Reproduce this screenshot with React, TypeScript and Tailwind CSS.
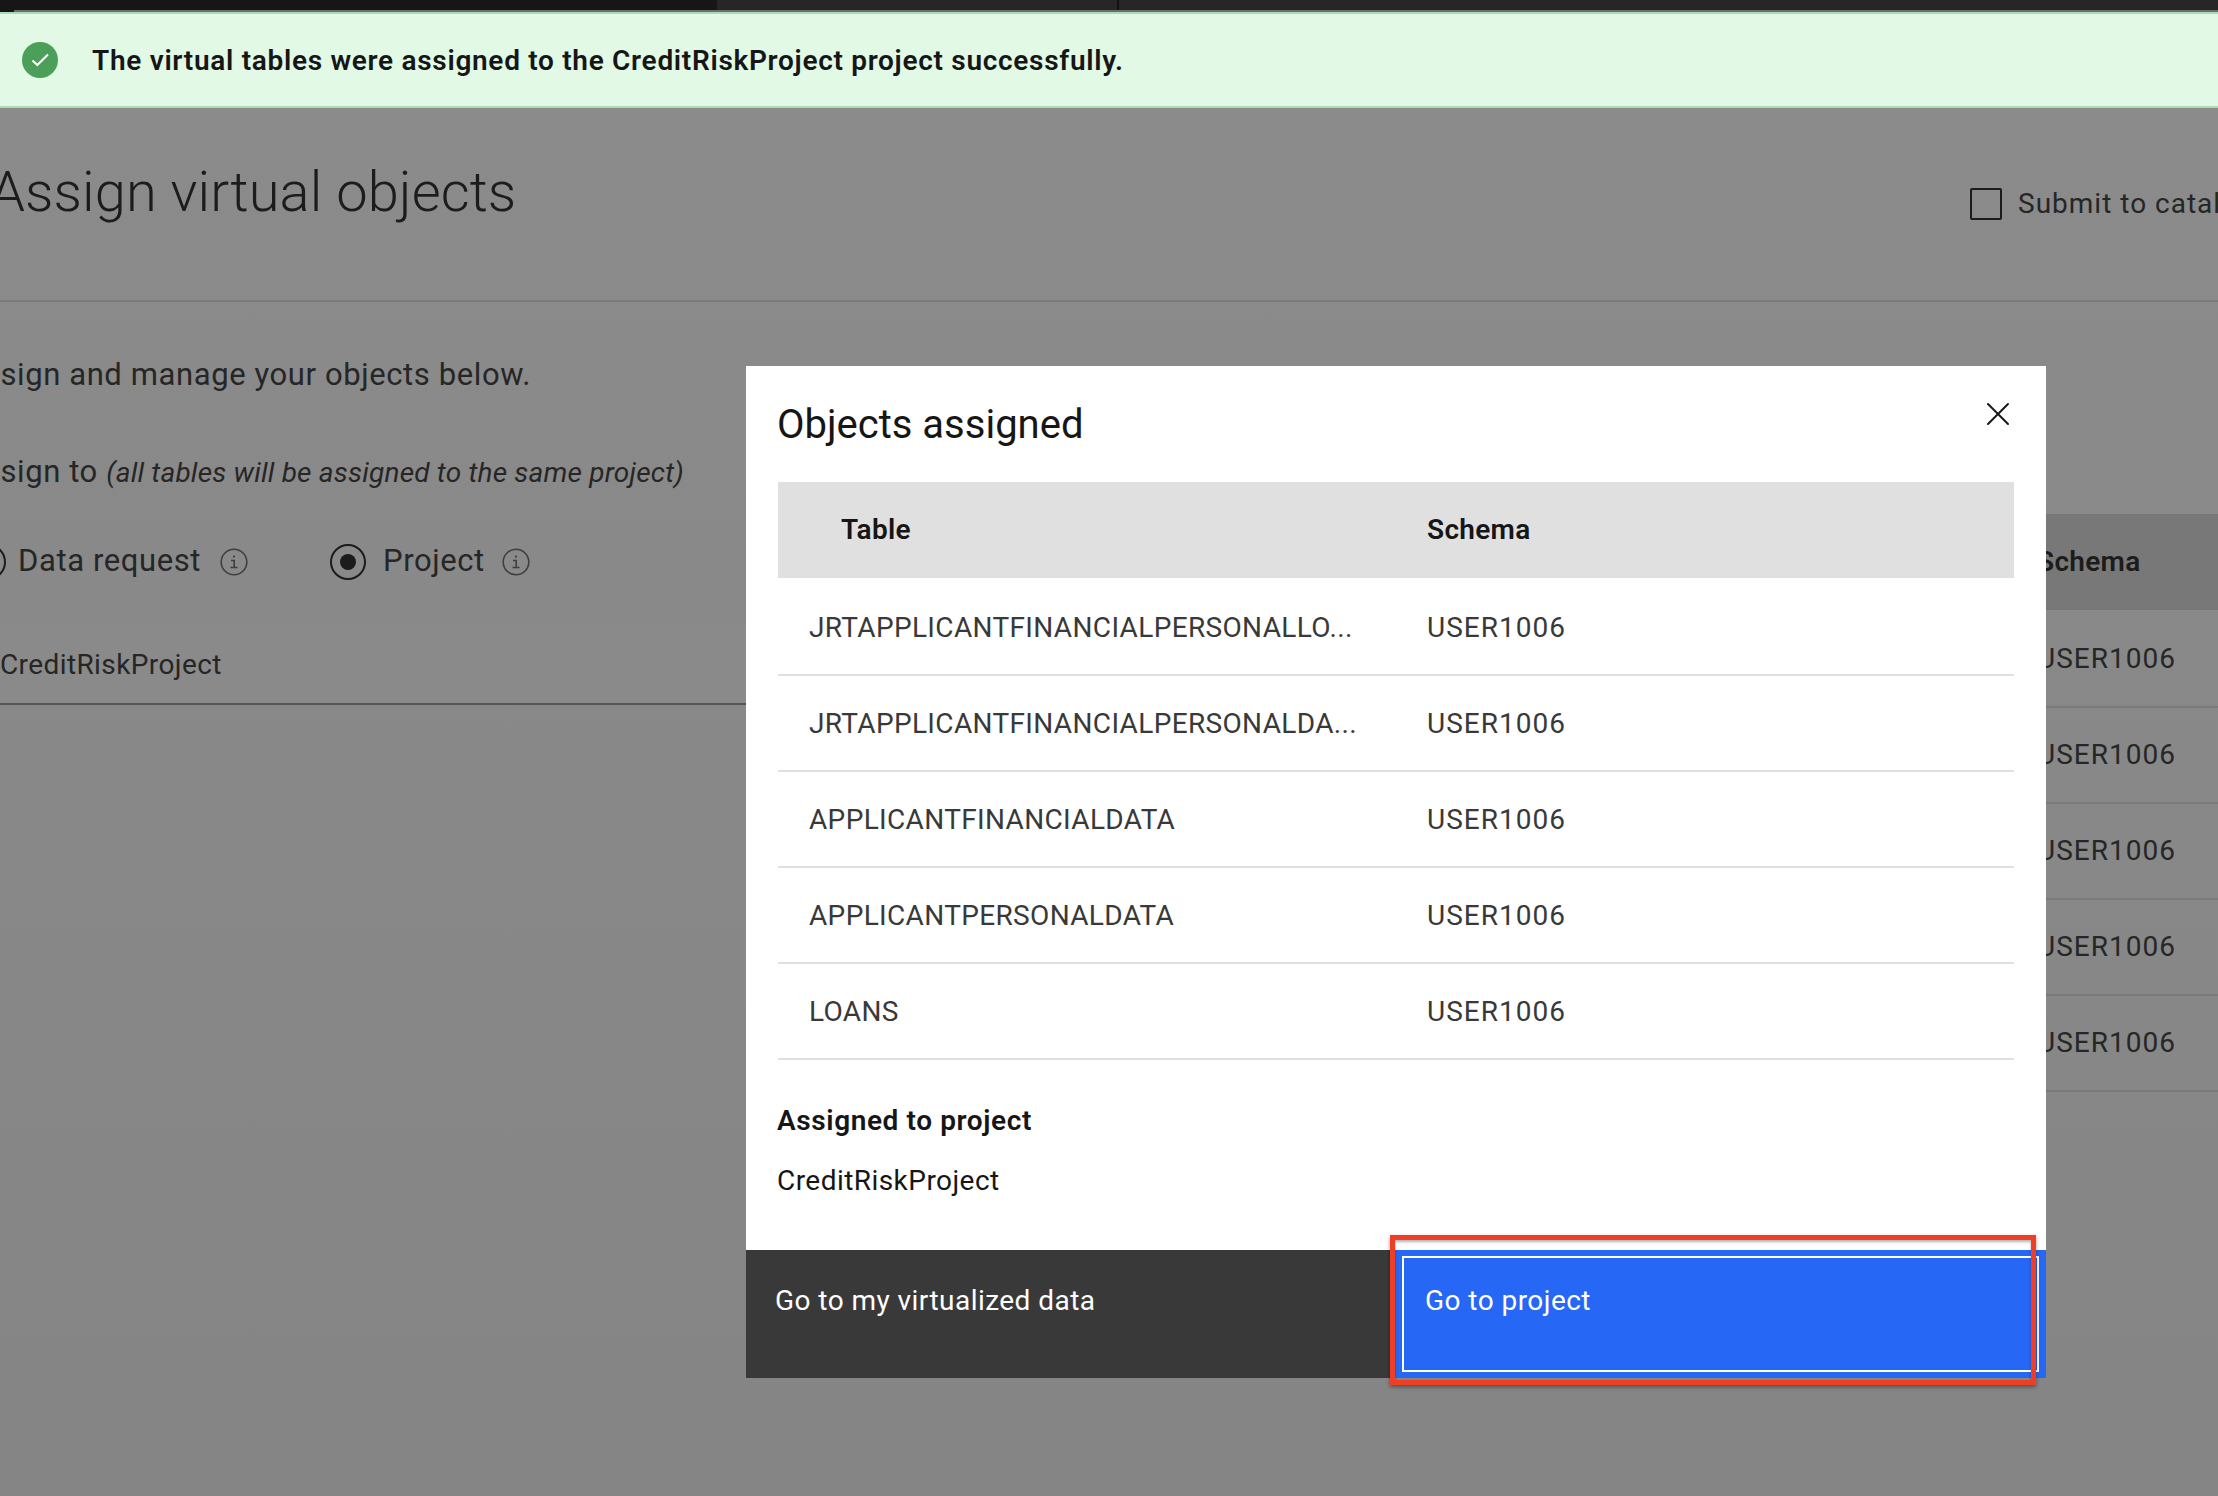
import React from 'react';
import { X } from 'lucide-react';

const font = "font-['Roboto','Liberation_Sans',sans-serif]";

const rows = [
  'JRTAPPLICANTFINANCIALPERSONALLO...',
  'JRTAPPLICANTFINANCIALPERSONALDA...',
  'APPLICANTFINANCIALDATA',
  'APPLICANTPERSONALDATA',
  'LOANS',
];

const InfoIcon = () => (
  <svg width="28" height="28" viewBox="0 0 28 28" fill="none" stroke="#3f3f3f" strokeWidth="1.6" className="shrink-0">
    <circle cx="14" cy="14" r="12.8" />
    <path d="M11 12.5h3.2v7M10.5 19.5h7" />
    <circle cx="14" cy="8.6" r="1.1" fill="#3f3f3f" stroke="none" />
  </svg>
);

const Notification = () => (
  <div className="flex h-[96px] items-center border-y-2 border-[#a7dcb4] bg-[#e1f9e5]">
    <svg width="36" height="36" viewBox="0 0 36 36" className="ml-[22px] shrink-0">
      <circle cx="18" cy="18" r="18" fill="#4c9f58" />
      <path d="M10.5 18.5L15.3 23L26 12.5" fill="none" stroke="#fff" strokeWidth="2" />
    </svg>
    <span className="ml-[34px] pt-[2px] text-[28px] font-semibold tracking-[0.7px] text-[#161616]">
      The virtual tables were assigned to the CreditRiskProject project successfully.
    </span>
  </div>
);

const BackgroundPage = () => (
  <div className="h-[1388px] bg-gradient-to-b from-[#8b8b8b] to-[#858585] text-[#1c1c1c]">
    <div className="flex h-[194px] items-center border-b-2 border-[#7a7a7a] pb-[24px]">
      <h1 className="ml-[-10px] whitespace-nowrap text-[56px] font-light tracking-[0.1px]">Assign virtual objects</h1>
      <div className="ml-auto mt-[24px] flex w-[248px] shrink-0 items-center gap-[16px] overflow-hidden">
        <span className="h-[32px] w-[32px] shrink-0 rounded-[2px] border-2 border-[#1c1c1c]" />
        <span className="whitespace-nowrap text-[28px] tracking-[1px] text-[#262626]">Submit to catalog</span>
      </div>
    </div>
    <div className="flex">
      <div className="w-[746px] shrink-0">
        <p className="ml-[-37px] mt-[53px] whitespace-nowrap text-[31px] leading-[40px] tracking-[0.6px] text-[#262626]">
          Assign and manage your objects below.
        </p>
        <p className="ml-[-37px] mt-[57px] whitespace-nowrap text-[31px] leading-[40px] tracking-[0.6px] text-[#262626]">
          Assign to <em className="text-[28px] tracking-[0.2px]">(all tables will be assigned to the same project)</em>
        </p>
        <div className="mt-[50px] flex h-[36px] items-center pt-[1px] text-[31px] tracking-[0.6px] text-[#262626]">
          <span className="ml-[-30px] h-[36px] w-[36px] shrink-0 rounded-full border-2 border-[#1c1c1c]" />
          <span className="ml-[12px] w-[184px]">Data request</span>
          <span className="ml-[18px]"><InfoIcon /></span>
          <span className="ml-[82px] flex h-[36px] w-[36px] shrink-0 items-center justify-center rounded-full border-2 border-[#1c1c1c]">
            <span className="h-[16px] w-[16px] rounded-full bg-[#1c1c1c]" />
          </span>
          <span className="ml-[17px] w-[100px]">Project</span>
          <span className="ml-[19px]"><InfoIcon /></span>
        </div>
        <div className="mt-[46px] flex h-[80px] items-center whitespace-nowrap border-b-2 border-[#555] bg-[#8a8a8a] pt-[2px] text-[28px] tracking-[0.4px] text-[#262626]">
          CreditRiskProject
        </div>
      </div>
      <div className="ml-auto mt-[212px] w-[193px] shrink-0">
        <div className="flex h-[96px] items-center bg-[#787878] pl-[12px] text-[28px] font-semibold tracking-[0.3px]">Schema</div>
        <div className="mt-[2px]">
          {rows.map((r) => (
            <div key={r} className="flex h-[96px] items-center border-b-2 border-[#7a7a7a] pl-[12px] text-[28px] tracking-[1px] text-[#262626]">
              USER1006
            </div>
          ))}
        </div>
      </div>
    </div>
  </div>
);

const Modal = () => (
  <div className="absolute left-[746px] top-[366px] flex h-[1012px] w-[1300px] flex-col bg-white text-[#161616]">
    <div className="relative h-[116px] px-[31px] pt-[33px] text-[40px] leading-[52px]">
      Objects assigned
      <X className="absolute right-[28px] top-[28px] h-[40px] w-[40px]" strokeWidth={1.2} />
    </div>
    <div className="px-[32px]">
      <div className="flex h-[96px] items-center bg-[#e0e0e0] text-[28px] font-semibold tracking-[0.3px]">
        <span className="ml-[63px] w-[586px]">Table</span>
        <span>Schema</span>
      </div>
      <div className="mt-[2px]">
        {rows.map((r) => (
          <div key={r} className="flex h-[96px] items-center border-b-2 border-[#e0e0e0] pt-[2px] text-[28px] text-[#393939]">
            <span className="ml-[31px] w-[618px] whitespace-nowrap tracking-[0.35px]">{r}</span>
            <span className="tracking-[1px]">USER1006</span>
          </div>
        ))}
      </div>
      <div className="ml-[-1px] mt-[43px] text-[28px] font-semibold leading-[36px] tracking-[0.6px]">Assigned to project</div>
      <div className="ml-[-1px] mt-[24px] text-[28px] leading-[36px] tracking-[0.45px]">CreditRiskProject</div>
    </div>
    <div className="mt-auto flex h-[128px] text-[28px] tracking-[0.45px] text-white">
      <div className="w-[649px] bg-[#393939] pl-[29px] pt-[30px]">Go to my virtualized data</div>
      <div className="flex-1 bg-[#2767f6] py-[6px] pl-[7px]">
        <div className="h-full w-[637px] border-2 border-white pl-[21px] pt-[22px]">Go to project</div>
      </div>
    </div>
  </div>
);

export default function App() {
  return (
    <div className={`relative h-[1496px] w-[2218px] overflow-hidden bg-[#161616] ${font}`}>
      <div className="flex h-[12px]">
        <div className="w-[717px] bg-[#161616]" />
        <div className="w-[400px] bg-[#262626]" />
        <div className="flex-1 border-l-2 border-[#111] bg-[#262626]" />
      </div>
      <div className="absolute left-[14px] right-0 top-[10px] h-[2px] bg-[#6b6f6b]" />
      <Notification />
      <BackgroundPage />
      <Modal />
      {/* red callout from the annotated screenshot */}
      <div className="absolute left-[1390px] top-[1235px] h-[150px] w-[646px] border-[5px] border-[#ee3e26] shadow-[0_2px_4px_rgba(0,0,0,0.4),inset_0_2px_3px_rgba(0,0,0,0.3)]" />
    </div>
  );
}
